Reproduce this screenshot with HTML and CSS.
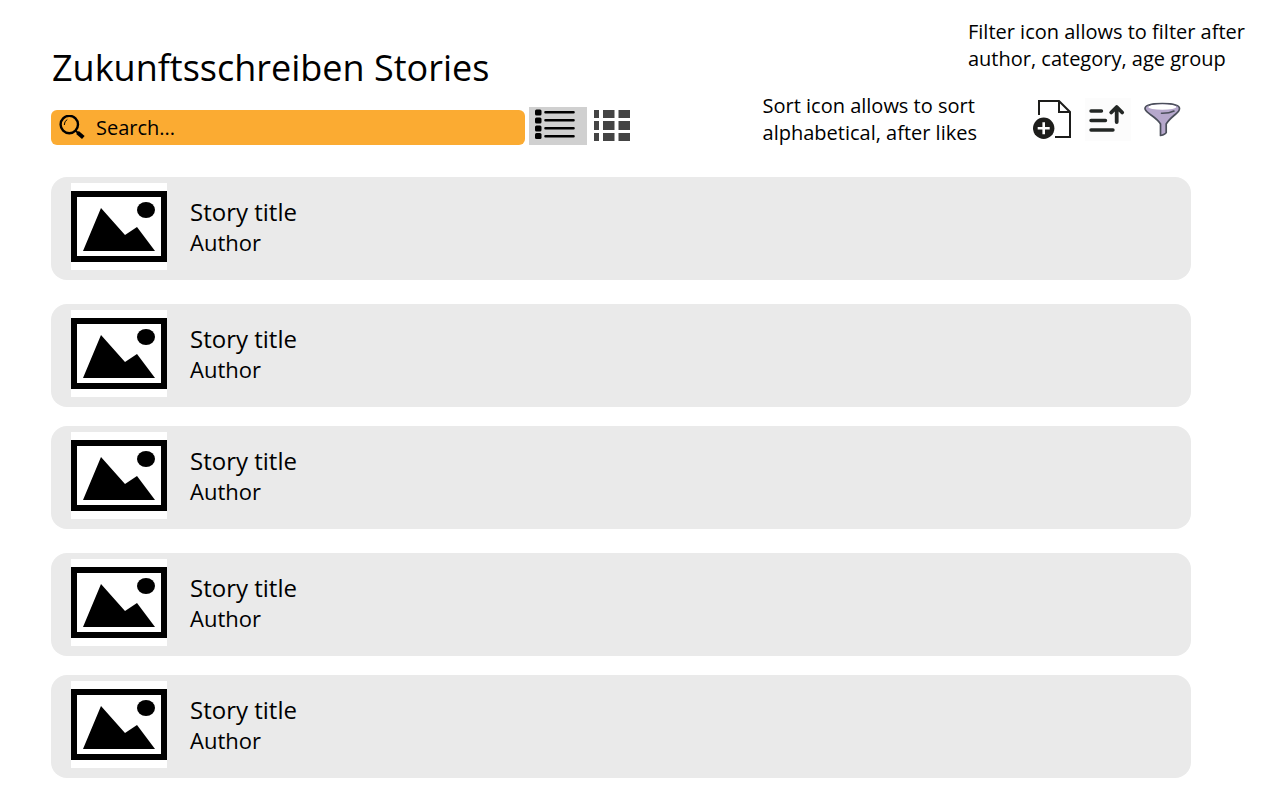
FILE: index.html
```html
<!DOCTYPE html>
<html lang="en">
<head>
<meta charset="utf-8">
<meta name="viewport" content="width=device-width, initial-scale=1">
<title>Zukunftsschreiben Stories</title>
<link rel="stylesheet" href="styles.css">
</head>
<body>
<svg class="symbols" aria-hidden="true">
  <symbol id="picture" viewBox="0 0 96 87">
    <path fill="#fff" d="M0 0h96v87H0z"/>
    <path fill="none" stroke="#000" stroke-width="6" d="M3 11h90v65H3z"/>
    <path d="M12 68 30 25l24 27 12-8 18 24z"/>
    <ellipse cx="75" cy="27" rx="9" ry="8"/>
  </symbol>
</svg>

<header class="header">
  <h1 class="title">Zukunftsschreiben Stories</h1>
  <p class="note">Filter icon allows to filter after<br>author, category, age group</p>
</header>

<main class="main">
  <div class="toolbar">
    <div class="browse">
      <form class="search" role="search">
        <svg class="search-icon" viewBox="0 0 26 25" aria-hidden="true">
          <circle cx="10.300" cy="9.500" r="8.700" fill="none" stroke="#000" stroke-width="2.400"/>
          <path d="M5.300 10q0-4 3-5.500" fill="none" stroke="#000" stroke-width="1"/>
          <path d="m16.500 15.500 2.500 2.500" stroke="#000" stroke-width="1.800"/>
          <path d="m18.500 17.500 5.800 5" stroke="#000" stroke-width="4"/>
        </svg>
        <input class="search-input" type="text" placeholder="Search..." aria-label="Search">
      </form>
      <button class="view view-active" type="button" aria-label="List view" aria-pressed="true">
        <svg width="58" height="38" viewBox="0 0 58 38" aria-hidden="true">
          <rect x="6" y="2.500" width="6.500" height="6" rx="1.500"/>
          <rect x="6" y="10.500" width="6.500" height="6" rx="1.500"/>
          <rect x="6" y="18.500" width="6.500" height="6" rx="1.500"/>
          <rect x="6" y="26" width="6.500" height="6" rx="1.500"/>
          <path d="M16.500 5.300h28M16.500 13.300h28M16.500 21.300h28M16.500 29.300h28" stroke="#000" stroke-width="2.600" stroke-linecap="round"/>
        </svg>
      </button>
      <button class="view" type="button" aria-label="Grid view" aria-pressed="false">
        <svg width="36" height="38" viewBox="0 0 36 38" aria-hidden="true">
          <path fill="#444" d="M0 3h5v8H0zM9 3h11.500v8H9zM24.500 3H36v8H24.500zM0 14h5v9H0zM9 14h11.500v9H9zM24.500 14H36v9H24.500zM0 26h5v8H0zM9 26h11.500v8H9zM24.500 26H36v8H24.500z"/>
        </svg>
      </button>
    </div>
    <p class="note note-sort">Sort icon allows to sort<br>alphabetical, after likes</p>
    <div class="actions">
      <button class="action" type="button" aria-label="Add story">
        <svg width="39" height="43" viewBox="0 0 39 43" aria-hidden="true">
          <path d="M6 17V3h20l11 11v25H22M26 3v11h11" fill="none" stroke="#1d1d1b" stroke-width="2"/>
          <circle cx="10.700" cy="30.200" r="10.700" fill="#1d1d1b"/>
          <path d="M10.700 24.200v12M4.700 30.200h12" stroke="#fff" stroke-width="2.600"/>
        </svg>
      </button>
      <button class="action action-sort" type="button" aria-label="Sort">
        <svg width="46" height="43" viewBox="0 0 46 43" aria-hidden="true">
          <path d="M6 13h10.500M6 22.500h14.500M6 32h22" stroke="#232725" stroke-width="3.400" stroke-linecap="round"/>
          <path d="M31.700 24V9.500M26.200 14.500l5.500-5.500 5.500 5.500" fill="none" stroke="#232725" stroke-width="3.800" stroke-linecap="round" stroke-linejoin="round"/>
        </svg>
      </button>
      <button class="action" type="button" aria-label="Filter">
        <svg width="37" height="43" viewBox="0 0 37 43" aria-hidden="true">
          <path d="M1 10.500C1 7 8 5.500 18.300 5.500S35.500 7 35.500 10.500c0 3-2.500 4.500-5.500 7-3.500 3-6 5.500-7.800 8.500v8.500c-.5 1.500-2.500 2.300-5.700 3V26C14.500 22.500 10.500 19.500 7 17c-3.500-2.800-6-4-6-6.500z" fill="#b6a8cc" stroke="#4b4f5b" stroke-width="1.700" stroke-linejoin="round"/>
          <ellipse cx="18.300" cy="9" rx="14" ry="2.700" fill="#fff"/>
          <path d="M4.300 8.300c1-2 7-2.700 14-2.700s13 .7 14 2.700" fill="none" stroke="#4b4f5b" stroke-width="1"/>
          <path d="M17.500 15.300q7.500.2 12.500-2.300" fill="none" stroke="#4b4f5b" stroke-width="1.600" stroke-linecap="round"/>
        </svg>
      </button>
    </div>
  </div>

  <ul class="stories">
    <li class="story">
      <svg class="thumb" role="img" aria-label="Story picture"><use href="#picture"/></svg>
      <div><h2 class="story-title">Story title</h2><p class="author">Author</p></div>
    </li>
    <li class="story">
      <svg class="thumb" role="img" aria-label="Story picture"><use href="#picture"/></svg>
      <div><h2 class="story-title">Story title</h2><p class="author">Author</p></div>
    </li>
    <li class="story">
      <svg class="thumb" role="img" aria-label="Story picture"><use href="#picture"/></svg>
      <div><h2 class="story-title">Story title</h2><p class="author">Author</p></div>
    </li>
    <li class="story">
      <svg class="thumb" role="img" aria-label="Story picture"><use href="#picture"/></svg>
      <div><h2 class="story-title">Story title</h2><p class="author">Author</p></div>
    </li>
    <li class="story">
      <svg class="thumb" role="img" aria-label="Story picture"><use href="#picture"/></svg>
      <div><h2 class="story-title">Story title</h2><p class="author">Author</p></div>
    </li>
  </ul>
</main>
</body>
</html>
```
FILE: styles.css
```css
* {
  box-sizing: border-box;
}

body {
  margin: 0;
  background: #fff;
  color: #000;
  font-family: "Open Sans", sans-serif;
}

h1, h2, p, ul {
  margin: 0;
  padding: 0;
  font-weight: 400;
}

button {
  flex: none;
  margin: 0;
  padding: 0;
  border: 0;
  background: none;
  cursor: pointer;
}

svg {
  display: block;
}

.symbols {
  width: 0;
  height: 0;
  position: absolute;
}

.header {
  display: flex;
  justify-content: space-between;
  align-items: flex-start;
  padding: 18px 35px 0 52px;
}

.title {
  padding-top: 25px;
  font-size: 36px;
  line-height: 49px;
}

.note {
  font-size: 20px;
  line-height: 27px;
  white-space: nowrap;
}

.main {
  padding: 0 89px 22px 51px;
}

.toolbar {
  display: flex;
  align-items: flex-start;
}

.browse {
  display: flex;
  align-items: flex-end;
  flex: 0 1 586px;
  padding-top: 15px;
}

.search {
  display: flex;
  align-items: center;
  flex: 1;
  min-width: 160px;
  height: 35px;
  margin-right: 4px;
  padding-left: 8px;
  gap: 11px;
  border-radius: 6px;
  background: #fbab32;
}

.search-icon {
  flex: none;
  width: 26px;
  height: 25px;
}

.search-input {
  flex: 1;
  min-width: 0;
  height: 35px;
  padding: 0;
  border: 0;
  background: none;
  color: #000;
  font: 20px "Open Sans", sans-serif;
}

.search-input::placeholder {
  color: #000;
  opacity: 1;
}

.view {
  margin-right: 7px;
}

.view-active {
  background: #d0d0d0;
}

.note-sort {
  margin-left: auto;
  margin-right: 56px;
}

.actions {
  display: flex;
  flex: none;
  gap: 13px;
  margin-right: 10px;
  padding-top: 6px;
}

.action-sort {
  background: #fcfcfc;
}

.stories {
  display: grid;
  padding-top: 31px;
  list-style: none;
}

.story {
  display: flex;
  align-items: center;
  gap: 23px;
  min-height: 103px;
  margin-bottom: 19px;
  padding: 6px 20px 10px;
  border-radius: 16px;
  background: #eaeaea;
}

.story:nth-child(odd) {
  margin-bottom: 24px;
}

.story:last-child {
  margin-bottom: 0;
}

.thumb {
  flex: none;
  width: 96px;
  height: 87px;
}

.story-title {
  font-size: 24px;
  line-height: 31px;
}

.author {
  font-size: 22px;
  line-height: 30px;
}
```
